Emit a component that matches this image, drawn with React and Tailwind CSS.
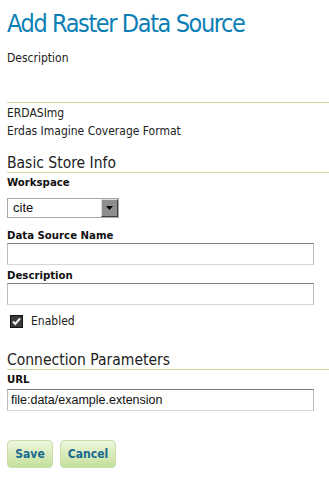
import React from "react";

const sans = { fontFamily: '"DejaVu Sans Condensed", "DejaVu Sans", sans-serif' };

const Rule = () => <div className="h-px bg-[#c6de9e]" />;

const Label = ({ children, className = "" }) => (
  <div className={`text-[11.3px] leading-[14px] font-bold text-[#111] ${className}`}>{children}</div>
);

const TextBox = ({ value = "", className = "" }) => (
  <div
    className={`h-[22px] w-[307px] bg-white border border-[#bdbdbd] border-t-[#7c7c7c] border-b-[#d6d6d6] px-[2px] flex items-center text-[12.5px] text-[#111] ${className}`}
    style={{ fontFamily: '"Liberation Sans", Arial, sans-serif' }}
  >
    {value}
  </div>
);

export default function App() {
  return (
    <div className="w-[329px] h-[478px] bg-white overflow-hidden" style={sans}>
      <div className="pl-[7px]">
        <h1 className="mt-[8px] text-[25px] leading-[32px] tracking-[-1.4px] text-[#0b7fb5] font-normal">
          Add Raster Data Source
        </h1>
        <p className="mt-[10px] text-[12px] leading-[16px] text-[#222]">Description</p>

        <div className="mt-[36px]">
          <Rule />
        </div>
        <div className="mt-px text-[12px] leading-[18px] text-[#222]">
          <div>ERDASImg</div>
          <div>Erdas Imagine Coverage Format</div>
        </div>

        <h2 className="mt-[14px] text-[15.5px] leading-[18px] text-[#222] font-normal">Basic Store Info</h2>
        <Rule />

        <Label className="mt-[3px]">Workspace</Label>
        <div className="mt-[8px] w-[112px] h-[20px] border border-[#a9a9a9] bg-white flex items-stretch">
          <div
            className="flex-1 flex items-center pl-[5px] text-[13px] text-[#111]"
            style={{ fontFamily: '"Liberation Sans", Arial, sans-serif' }}
          >
            cite
          </div>
          <div className="w-[17px] bg-[#8e8e8e] border border-t-[#dcdcdc] border-l-[#dcdcdc] border-r-[#404040] border-b-[#404040] flex items-center justify-center">
            <svg width="7" height="4" viewBox="0 0 7 4">
              <path d="M0 0h7L3.5 4z" fill="#000" />
            </svg>
          </div>
        </div>

        <Label className="mt-[11px]">Data Source Name</Label>
        <TextBox />

        <Label className="mt-[4px]">Description</Label>
        <TextBox />

        <div className="mt-[8px] flex items-center h-[16px]">
          <svg width="13" height="13" viewBox="0 0 13 13" className="ml-[3px]">
            <rect x="0.5" y="0.5" width="12" height="12" fill="#3a3a3a" stroke="#111" />
            <path d="M3 6.5l2.3 2.5L10 3.5" fill="none" stroke="#f2f2f2" strokeWidth="2" />
          </svg>
          <span className="ml-[8px] text-[12px] leading-[16px] text-[#222]">Enabled</span>
        </div>

        <h2 className="mt-[22px] text-[15.5px] leading-[18px] text-[#222] font-normal">Connection Parameters</h2>
        <Rule />

        <Label className="mt-[3px]">URL</Label>
        <TextBox value="file:data/example.extension" className="mt-[2px] pl-[3px]" />

        <div className="mt-[29px] flex gap-[7px]">
          <button className="h-[28px] w-[46px] rounded-[4px] border border-[#c9dca9] bg-gradient-to-b from-[#eef6df] to-[#c5e09b] text-[12px] font-bold text-[#17698f]">
            Save
          </button>
          <button className="h-[28px] w-[56px] rounded-[4px] border border-[#c9dca9] bg-gradient-to-b from-[#eef6df] to-[#c5e09b] text-[12px] font-bold text-[#17698f]">
            Cancel
          </button>
        </div>
      </div>
    </div>
  );
}
